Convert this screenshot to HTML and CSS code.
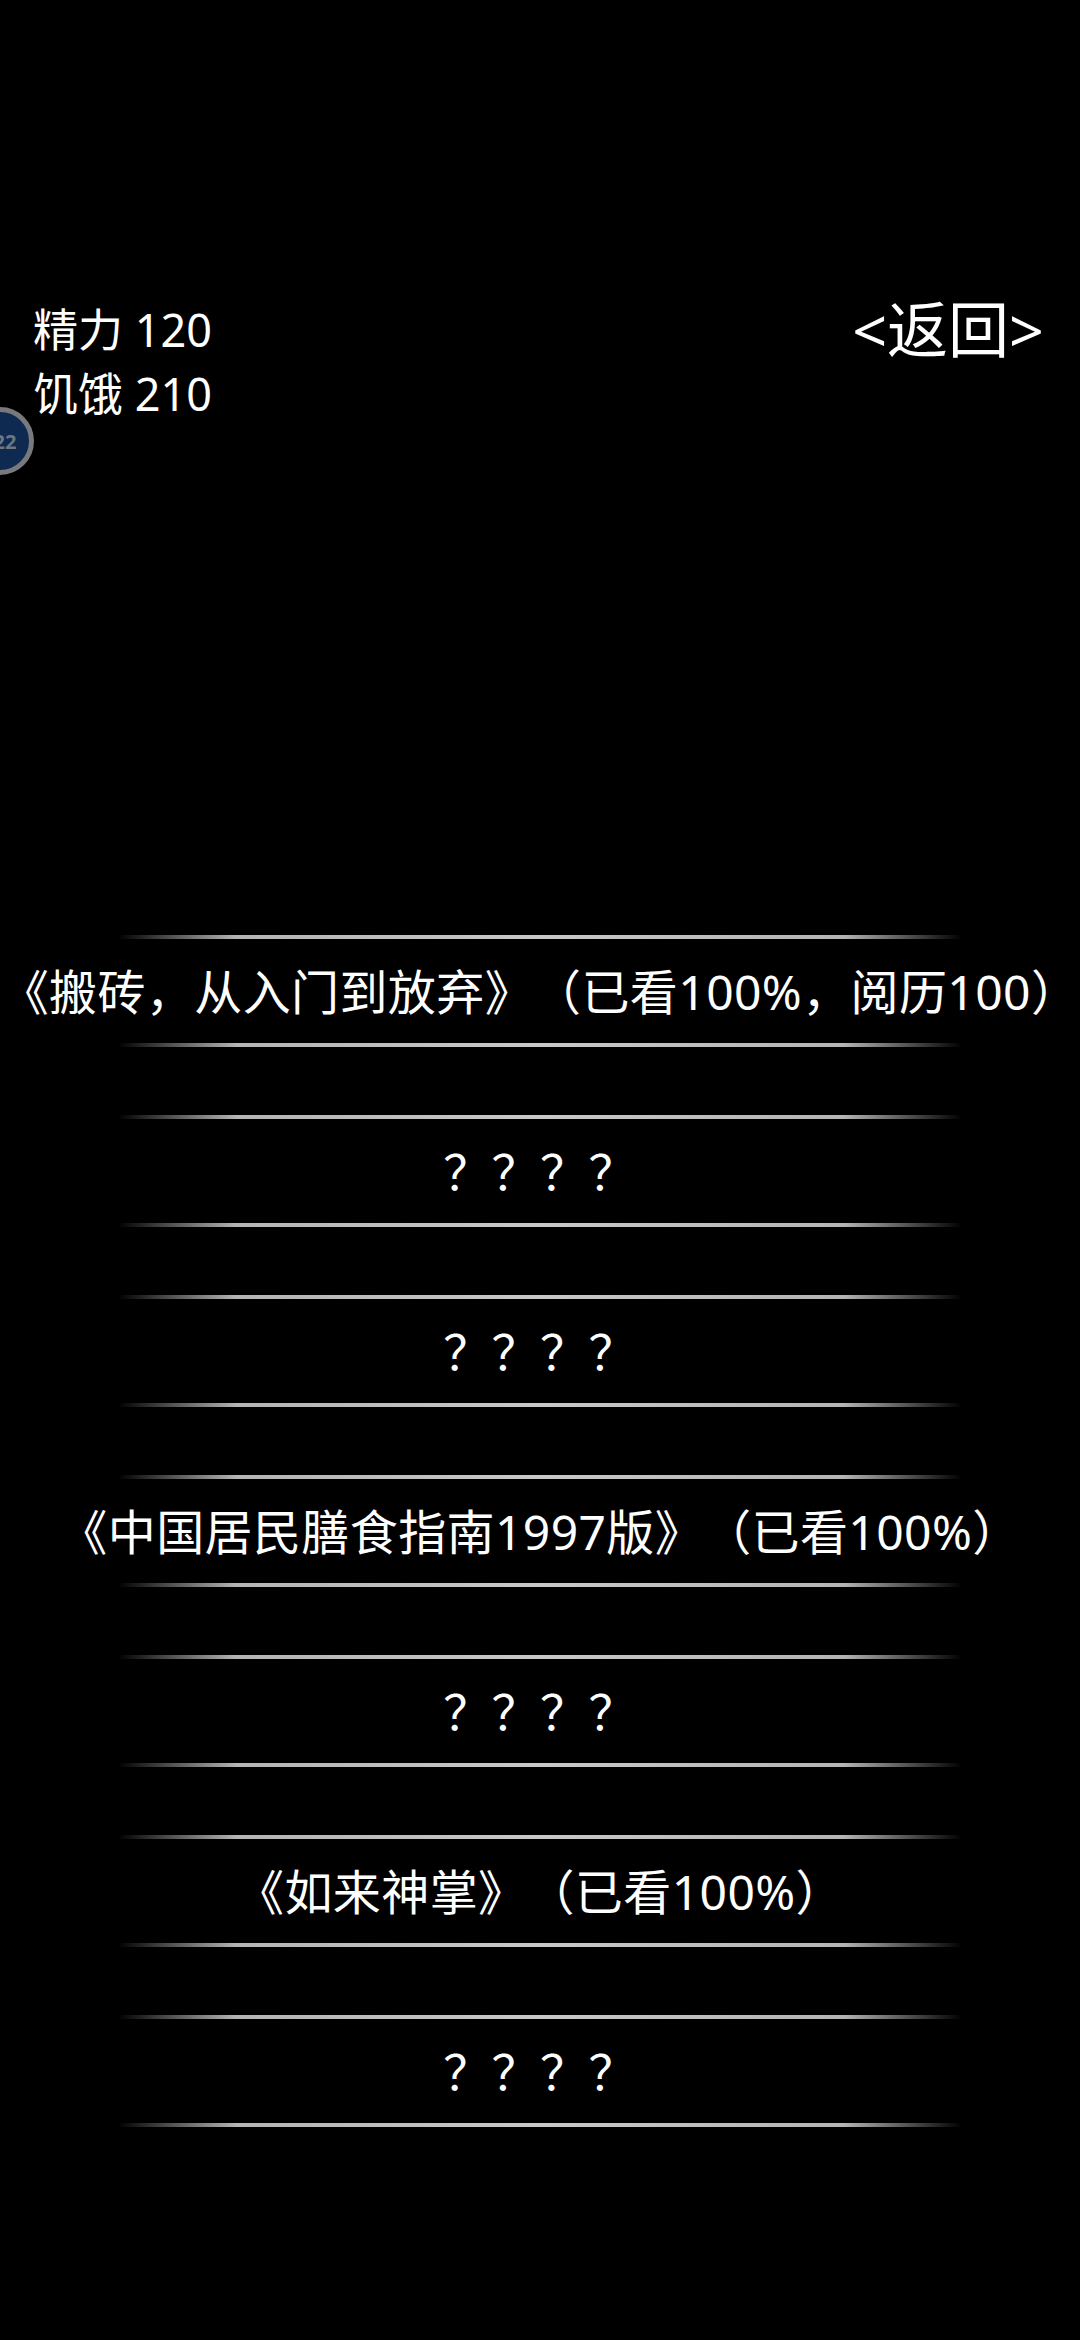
FILE: index.html
```html
<!DOCTYPE html>
<html lang="zh">
<head>
    <meta charset="UTF-8">
    <title>书架</title>
    <link rel="stylesheet" href="styles.css">
</head>
<body>

    <!-- 状态 -->
    <div class="top">
        <div class="stats">
            <p>精力 120</p>
            <p>饥饿 210</p>
        </div>
        <a href="#" class="back">&lt;返回&gt;</a>
    </div>

    <div class="float-ball"><span>22</span></div>

    <!-- 书目 -->
    <div class="books">
        <div class="book">《搬砖，从入门到放弃》（已看100%，阅历100）</div>
        <div class="book">？？？？</div>
        <div class="book">？？？？</div>
        <div class="book">《中国居民膳食指南1997版》（已看100%）</div>
        <div class="book">？？？？</div>
        <div class="book">《如来神掌》（已看100%）</div>
        <div class="book">？？？？</div>
    </div>

</body>
</html>
```

FILE: styles.css
```css
* {
    margin: 0;
    padding: 0;
    box-sizing: border-box;
}

body {
    width: 1080px;
    height: 2340px;
    background: #000;
    color: #fff;
    font-family: "Noto Sans", "Noto Sans CJK SC", sans-serif;
    font-feature-settings: "chws" 0;
    text-spacing-trim: space-all;
    overflow: hidden;
    position: relative;
}

.top {
    display: flex;
    justify-content: space-between;
    padding: 298px 36px 0 33px;
}

.stats p {
    font-size: 45px;
    line-height: 64px;
}

.back {
    color: #fff;
    text-decoration: none;
    font-size: 61px;
    line-height: 64px;
}

.float-ball {
    position: absolute;
    left: -34px;
    top: 407px;
    width: 68px;
    height: 68px;
    border-radius: 50%;
    background: #0f2a50;
    border: 5px solid #77797c;
    display: flex;
    align-items: center;
    justify-content: center;
    padding-left: 10px;
}

.float-ball span {
    font-size: 20px;
    font-weight: 700;
    color: #6c7783;
}

.books {
    margin-top: 509px;
    display: flex;
    flex-direction: column;
    gap: 68px;
}

.book {
    position: relative;
    height: 112px;
    font-size: 48px;
    letter-spacing: 0.4px;
    line-height: 114px;
    text-align: center;
    white-space: nowrap;
}

.book::before,
.book::after {
    content: "";
    position: absolute;
    left: 118px;
    width: 844px;
    height: 4px;
    background: linear-gradient(to right, rgba(200,200,200,0), #b4b4b4 14%, #c8c8c8 50%, #b4b4b4 86%, rgba(200,200,200,0));
}

.book::before {
    top: 0;
}

.book::after {
    bottom: 0;
}
```
